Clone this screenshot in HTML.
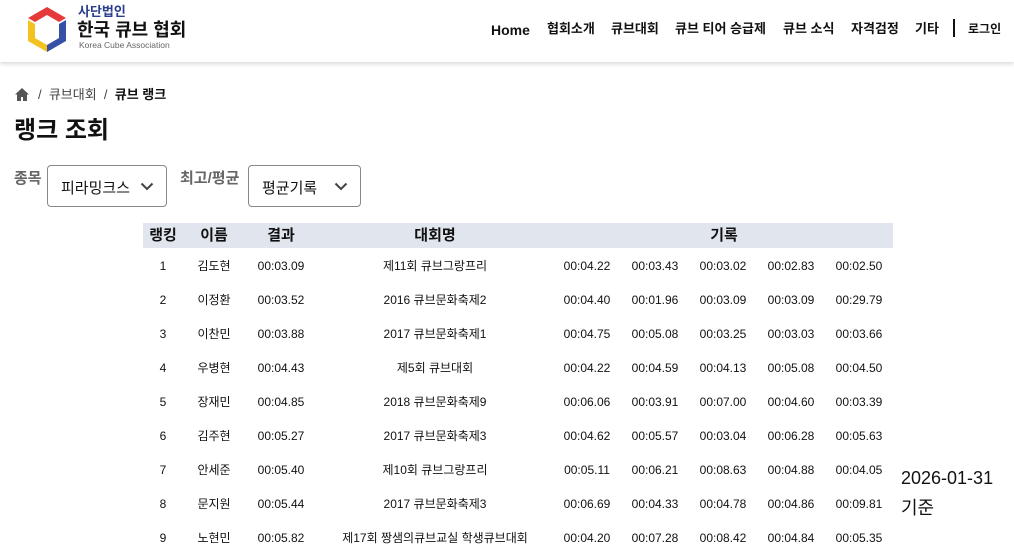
<!DOCTYPE html>
<html><head><meta charset="utf-8"><style>
*{margin:0;padding:0;box-sizing:border-box}
body{width:1014px;height:551px;overflow:hidden;background:#fff;font-family:"Liberation Sans","Noto Sans CJK KR",sans-serif;color:#111;position:relative}
.hdr{position:absolute;left:0;top:0;width:1014px;height:62px;background:#fff;box-shadow:0 2px 4px rgba(0,0,0,.15)}
.a{position:absolute;white-space:nowrap}
.nav{top:20px;font-size:13px;font-weight:bold;color:#111;line-height:18px}
.sel{position:absolute;border:1px solid #888;border-radius:4px;height:42px;top:165px;font-size:15px;padding:11px 0 0 13px;overflow:hidden;background:#fff}
.sel svg{position:absolute;right:12px;top:16px}
.th{position:absolute;top:223px;left:143px;width:750px;height:25px;background:#e1e6ee}
.c{position:absolute;transform:translateX(-50%);font-size:12px;white-space:nowrap;line-height:16px;height:16px}
.h{font-size:15px;font-weight:bold;top:226px;line-height:20px;height:20px}
</style></head><body>
<div class="hdr"></div>
<svg class="a" style="left:25px;top:6px" width="44" height="46" viewBox="0 0 44 46">
<polygon points="22,1 41,12 34,16 22,9 10,16 3,12" fill="#e63a3a"/>
<polygon points="3,14 10,18 10,32 22,39 22,46 3,35" fill="#f2c320"/>
<polygon points="41,14 34,18 34,32 22,39 22,46 41,35" fill="#3650a8"/>
</svg>
<div class="a" style="left:78px;top:4px;font-size:13px;font-weight:bold;color:#2b3f8f;line-height:16px">사단법인</div>
<div class="a" style="left:77px;top:19px;font-size:18px;font-weight:bold;color:#111;line-height:22px">한국 큐브 협회</div>
<div class="a" style="left:79px;top:40px;font-size:8.5px;color:#666;line-height:10px">Korea Cube Association</div>
<div class="a nav" style="left:491px;font-size:14px;top:21px">Home</div>
<div class="a nav" style="left:547px">협회소개</div>
<div class="a nav" style="left:611px">큐브대회</div>
<div class="a nav" style="left:675px">큐브 티어 승급제</div>
<div class="a nav" style="left:783px">큐브 소식</div>
<div class="a nav" style="left:851px">자격검정</div>
<div class="a nav" style="left:915px">기타</div>
<div class="a" style="left:953px;top:19px;width:2px;height:18px;background:#111"></div>
<div class="a nav" style="left:968px;font-size:12px">로그인</div>
<svg class="a" style="left:15px;top:88px" width="14" height="13" viewBox="0 0 14 13"><path d="M7 0L0 6.5h2V13h4V9h2v4h4V6.5h2z" fill="#555"/></svg>
<div class="a" style="left:38px;top:86px;font-size:13px;color:#444;line-height:18px">/&nbsp;&nbsp;큐브대회&nbsp;&nbsp;/&nbsp;&nbsp;<b style="color:#111">큐브 랭크</b></div>
<div class="a" style="left:14px;top:116px;font-size:24px;font-weight:bold;line-height:30px">랭크 조회</div>
<div class="a" style="left:14px;top:167px;font-size:15px;font-weight:bold;color:#666">종목</div>
<div class="sel" style="left:47px;width:120px">피라밍크스<svg width="14" height="9" viewBox="0 0 14 9"><path d="M1.5 1.5L7 7l5.5-5.5" stroke="#444" stroke-width="2" fill="none"/></svg></div>
<div class="a" style="left:180px;top:167px;font-size:15px;font-weight:bold;color:#666">최고/평균</div>
<div class="sel" style="left:248px;width:113px">평균기록<svg width="14" height="9" viewBox="0 0 14 9"><path d="M1.5 1.5L7 7l5.5-5.5" stroke="#444" stroke-width="2" fill="none"/></svg></div>
<div class="th"></div>
<div class="c h" style="left:163px">랭킹</div>
<div class="c h" style="left:214px">이름</div>
<div class="c h" style="left:281px">결과</div>
<div class="c h" style="left:435px">대회명</div>
<div class="c h" style="left:724px">기록</div>
<div id="rows"></div>
<div class="a" style="left:901px;top:463px;font-size:18px;line-height:30px">2026-01-31<br>기준</div>
<script>
var d=[["1","김도현","00:03.09","제11회 큐브그랑프리","00:04.22","00:03.43","00:03.02","00:02.83","00:02.50"],
["2","이정환","00:03.52","2016 큐브문화축제2","00:04.40","00:01.96","00:03.09","00:03.09","00:29.79"],
["3","이찬민","00:03.88","2017 큐브문화축제1","00:04.75","00:05.08","00:03.25","00:03.03","00:03.66"],
["4","우병현","00:04.43","제5회 큐브대회","00:04.22","00:04.59","00:04.13","00:05.08","00:04.50"],
["5","장재민","00:04.85","2018 큐브문화축제9","00:06.06","00:03.91","00:07.00","00:04.60","00:03.39"],
["6","김주현","00:05.27","2017 큐브문화축제3","00:04.62","00:05.57","00:03.04","00:06.28","00:05.63"],
["7","안세준","00:05.40","제10회 큐브그랑프리","00:05.11","00:06.21","00:08.63","00:04.88","00:04.05"],
["8","문지원","00:05.44","2017 큐브문화축제3","00:06.69","00:04.33","00:04.78","00:04.86","00:09.81"],
["9","노현민","00:05.82","제17회 짱샘의큐브교실 학생큐브대회","00:04.20","00:07.28","00:08.42","00:04.84","00:05.35"]];
var x=[163,214,281,435,587,655,723,791,859],h="";
d.forEach(function(r,i){r.forEach(function(v,j){h+='<div class="c" style="left:'+x[j]+'px;top:'+(258+i*34)+'px">'+v+'</div>'})});
document.getElementById("rows").innerHTML=h;
</script>
</body></html>
